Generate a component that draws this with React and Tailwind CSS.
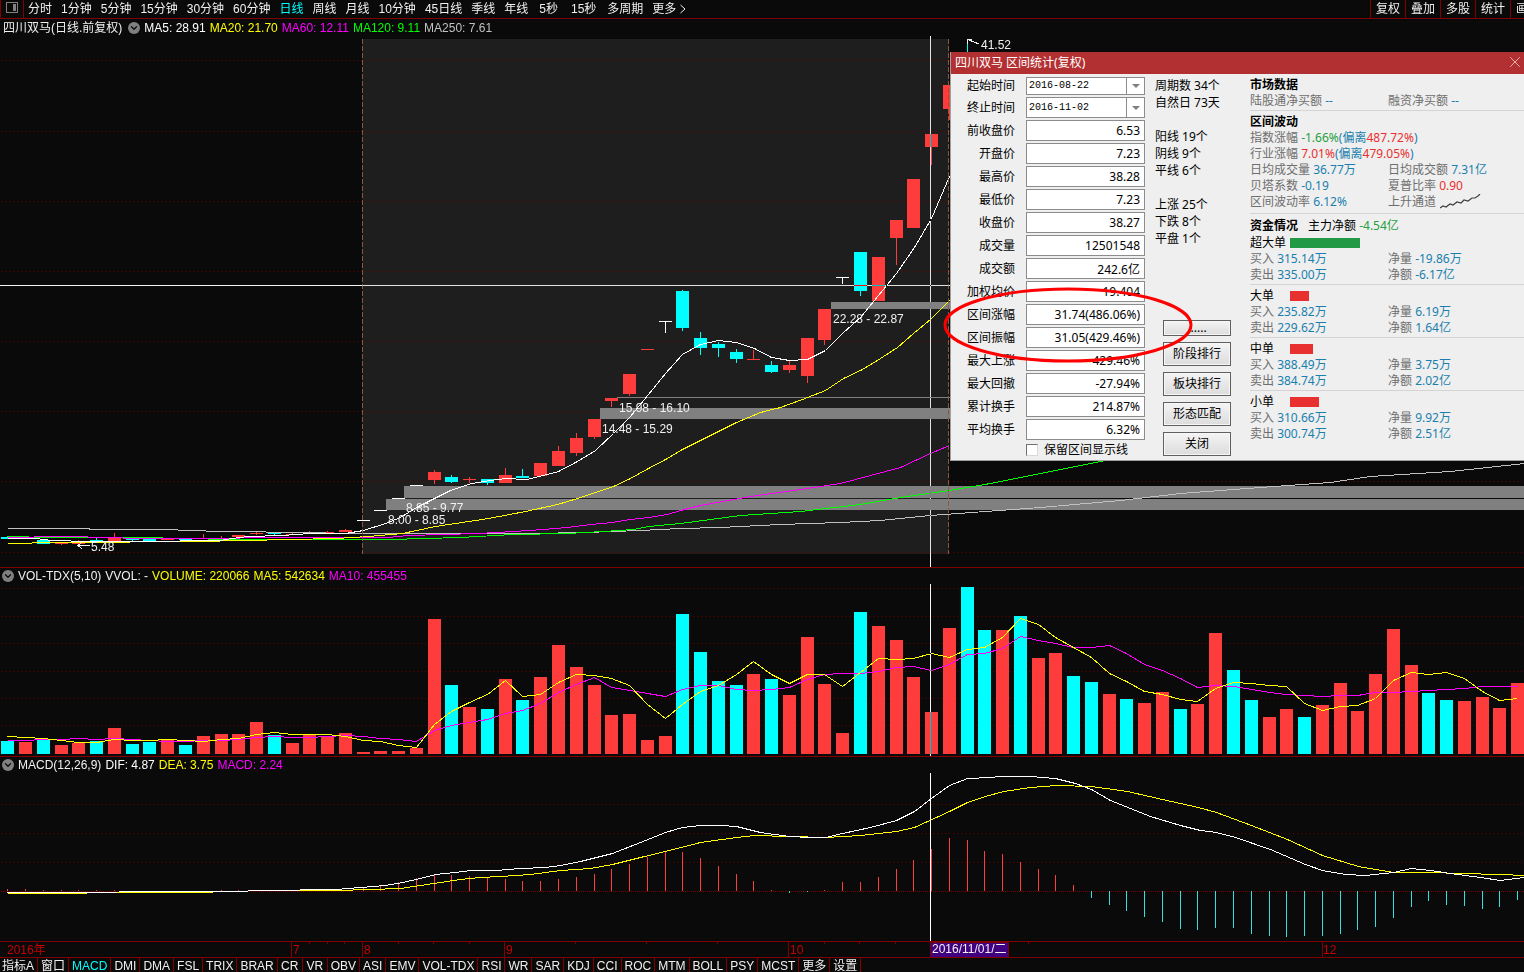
import { useState } from 'react';
import { ChevronDown, X } from 'lucide-react';

const periods = ['分时', '1分钟', '5分钟', '15分钟', '30分钟', '60分钟', '日线', '周线', '月线', '10分钟', '45日线', '季线', '年线', '5秒', '15秒', '多周期'];
const tools = ['复权', '叠加', '多股', '统计', '画'];
const indicators = [
  '指标A', '窗口', 'MACD', 'DMI', 'DMA', 'FSL', 'TRIX', 'BRAR', 'CR', 'VR', 'OBV', 'ASI', 'EMV', 'VOL-TDX', 'RSI', 'WR',
  'SAR', 'KDJ', 'CCI', 'ROC', 'MTM', 'BOLL', 'PSY', 'MCST', '更多', '设置',
];

const RED = '#ff3c3c';
const CYAN = '#00ffff';

// centre of the n-th trading day
const dayX = (i) => Math.floor(7.9 + i * 17.762);

// [day, body top, body bottom, high, low, colour]
const candles = [
  [0, 537, 539, 537, 539, CYAN], [2, 540, 544, 540, 544, CYAN], [3, 542, 544, 542, 545, RED], [4, 541, 544, 540, 544, RED],
  [5, 540, 541, 538, 543, CYAN], [6, 538, 541, 533, 541, RED], [7, 539, 540, 538, 541, CYAN], [8, 539, 541, 539, 541, CYAN],
  [9, 538, 540, 538, 540, RED], [10, 539, 540, 539, 540, CYAN], [11, 538, 539, 534, 539, RED], [12, 538, 539, 536, 539, RED],
  [13, 535, 537, 535, 537, RED], [14, 533, 534, 532, 535, RED], [15, 533, 534, 532, 535, CYAN], [16, 534, 535, 532, 535, RED],
  [17, 533, 534, 531, 534, RED], [18, 532, 533, 531, 533, RED], [19, 530, 532, 529, 532, RED],
  [20, 520, 521, 520, 521, '#fff'], [21, 510, 511, 510, 511, '#fff'], [22, 498, 499, 498, 499, '#fff'], [23, 485, 486, 485, 486, '#fff'],
  [24, 472, 480, 470, 484, RED], [25, 477, 482, 475, 483, CYAN], [26, 479, 480, 477, 483, RED], [27, 479, 483, 479, 485, CYAN],
  [28, 475, 483, 468, 483, RED], [29, 476, 478, 469, 478, CYAN], [30, 463, 476, 463, 477, RED], [31, 451, 466, 446, 466, RED],
  [32, 438, 453, 433, 456, RED], [33, 419, 437, 419, 439, RED], [34, 398, 401, 398, 407, RED], [35, 374, 394, 374, 396, RED],
  [36, 349, 350, 349, 350, RED], [37, 321, 322, 321, 333, '#fff'], [38, 291, 328, 290, 331, CYAN], [39, 338, 348, 332, 355, CYAN],
  [40, 344, 348, 342, 357, CYAN], [41, 352, 359, 349, 363, CYAN], [42, 359, 360, 350, 360, RED], [43, 365, 372, 361, 373, CYAN],
  [44, 365, 370, 361, 373, RED], [45, 338, 376, 338, 383, RED], [46, 309, 340, 309, 345, RED], [47, 277, 278, 277, 284, '#fff'],
  [48, 252, 291, 252, 296, CYAN], [49, 257, 301, 257, 301, RED], [50, 220, 238, 220, 265, RED], [51, 179, 228, 179, 228, RED],
  [52, 134, 147, 134, 165, RED], [53, 85, 109, 85, 120, RED], [54, 80, 90, 40, 90, CYAN],
];

const gaps = [
  { x: 404, y: 486, h: 12, label: '8.85 - 9.77', tx: 406, ty: 512 },
  { x: 386, y: 499, h: 11, label: '8.00 - 8.85', tx: 388, ty: 524 },
  { x: 600, y: 408, h: 11, label: '14.48 - 15.29', tx: 602, ty: 433 },
  { x: 617, y: 397, h: 1, label: '15.98 - 16.10', tx: 619, ty: 412 },
  { x: 831, y: 302, h: 7, label: '22.28 - 22.87', tx: 833, ty: 323 },
];

const priceLines = [
  ['#c0c0c0', '7,528 88,528 90,529 175,529 180,530 230,531 300,532 350,533 530,533 585,532 640,530 680,528 720,527 780,524 840,522 880,520 930,515 1040,507 1120,500 1180,493 1260,487 1330,482 1370,476 1450,471 1524,463'],
  ['#00ff00', '7,536 50,537 140,537 230,539 388,539 425,538 460,537 495,535 513,534 567,533 603,531 633,529 648,526 680,523 740,515 800,511 860,504 900,497 949,490 990,483 1040,473 1100,461 1140,453'],
  ['#ff00ff', '7,537 16,537 52,536 70,536 140,538 340,537 388,537 408,535 443,534 478,533 513,531 543,529 567,527 590,524 612,522 630,519 648,517 667,514 680,510 700,505 750,496 800,489 840,483 870,475 900,467 930,453 949,445'],
  ['#ffff00', '7,543 16,543 48,542 120,542 140,541 195,541 245,540 335,538 368,536 402,533 435,526 455,523 488,518 525,511 557,504 577,498 595,492 613,486 630,478 648,468 667,458 680,450 700,440 718,431 736,422 760,412 780,407 802,399 825,390 843,378 862,369 880,358 897,347 913,333 930,319 949,300'],
  ['#ffffff', '7,538 35,538 52,540 88,541 140,541 220,540 232,538 248,536 282,535 310,533 345,533 363,530 385,523 400,517 416,507 434,498 450,490 471,483 490,480 505,478 526,479 543,475 558,471 577,461 595,450 613,433 630,416 648,394 665,373 682,354 700,344 718,340 736,342 754,348 771,357 789,360 807,359 825,350 842,333 860,317 878,295 896,273 914,247 931,218 949,176'],
];

// top edge of every volume bar, c = falling day
const volume = (
  '741c 742 740c 745 743 741c 728 744c 742c 739 745c 736 734 734 722 735c 743 735 736 733 752 751 751 748 619 685c 707 709c 679 700c ' +
  '677 645 667 685 715 714 740 736 614c 652c 681c 685c 674 679c 695 637 684 733 612c 626 640 677 712 628 587c 630c 630 616c 658 653 ' +
  '676c 682c 694 699c 703 692 709c 704 633 670c 700c 717 709 717c 705 683 711 674 629 665 693c 700c 701 697 708 683'
).split(' ').map((v) => ({ top: parseInt(v, 10), down: v.endsWith('c') }));

const average = (span, early) =>
  volume
    .map((_, i) => {
      if (i < early.length) return `${dayX(i)},${early[i]}`;
      const part = volume.slice(i - span + 1, i + 1);
      return `${dayX(i)},${Math.round(part.reduce((sum, v) => sum + v.top, 0) / span)}`;
    })
    .join(' ');

const volumeLines = [
  ['#ff00ff', average(10, [740, 740, 739, 739, 738, 739, 738, 739, 740])],
  ['#ffff00', average(5, [736, 737, 738, 740])],
];

const histogram = [
  889, 889, 890, 890, 890, 890, 890, 891, 891, 891, 891, 891, 890, 890, 890, 890, 890, 890, 890, 890, 888, 885, 882, 878, 874, 875, 876, 878,
  879, 881, 881, 879, 877, 874, 869, 864, 857, 851, 852, 858, 866, 874, 881, 890, 893, 892, 890, 882, 882, 877, 869, 860, 849, 838, 840, 851,
  854, 862, 869, 875, 885, 898, 905, 911, 917, 922, 929, 930, 928, 928, 934, 936, 937, 936, 936, 934, 930, 927, 918, 907, 901, 905, 906, 909,
  907, 900,
];

const macdLines = [
  ['#ffff00', '7,893 85,893 88,892 195,892 230,891 265,890 335,890 370,889 400,888 420,885 440,882 460,879 480,877 500,876 530,874 560,870 590,868 612,864 640,857 665,851 700,842 736,837 754,835 825,837 860,835 896,831 914,827 949,811 967,802 985,796 1003,791 1030,787 1056,785 1091,786 1127,791 1162,799 1198,807 1216,812 1251,825 1287,839 1322,855 1358,866 1393,872 1430,872 1460,873 1500,874 1524,875'],
  ['#ffffff', '7,892 230,891 265,890 335,889 360,887 385,885 402,882 420,878 435,874 455,872 470,870 495,870 520,868 545,867 560,865 580,861 612,853 640,842 665,832 682,827 700,825 720,825 736,826 760,832 789,836 810,837 825,837 842,833 870,827 896,820 914,811 931,798 949,785 967,778 990,777 1000,776 1030,776 1055,778 1075,783 1091,789 1110,800 1130,808 1150,816 1180,825 1200,830 1216,832 1235,837 1270,849 1305,864 1322,870 1345,874 1365,875 1393,872 1411,868 1430,870 1450,873 1480,877 1500,880 1524,877'],
];

const prices = [
  ['前收盘价', '6.53'], ['开盘价', '7.23'], ['最高价', '38.28'], ['最低价', '7.23'], ['收盘价', '38.27'], ['成交量', '12501548'],
  ['成交额', '242.6亿'], ['加权均价', '19.404'], ['区间涨幅', '31.74(486.06%)'], ['区间振幅', '31.05(429.46%)'], ['最大上涨', '429.46%'],
  ['最大回撤', '-27.94%'], ['累计换手', '214.87%'], ['平均换手', '6.32%'],
];

const counts = ['周期数 34个', '自然日 73天', '', '阳线 19个', '阴线 9个', '平线 6个', '', '上涨 25个', '下跌 8个', '平盘 1个'];

const orders = [
  { name: '大单', bar: 19, buy: '235.82万', sell: '229.62万', net: '6.19万', amount: '1.64亿' },
  { name: '中单', bar: 23, buy: '388.49万', sell: '384.74万', net: '3.75万', amount: '2.02亿' },
  { name: '小单', bar: 29, buy: '310.66万', sell: '300.74万', net: '9.92万', amount: '2.51亿' },
];

// a chart area; children are drawn in page coordinates
function Plot({ top, className, children }) {
  return (
    <svg className={`block w-full ${className}`} shapeRendering="crispEdges">
      <g transform={`translate(0 ${-top})`}>{children}</g>
    </svg>
  );
}

function GridLines({ rows }) {
  return rows.map((y) => (
    <line key={y} x1="1" x2="100%" y1={y + 0.5} y2={y + 0.5} stroke="#640000" strokeDasharray="1 3" />
  ));
}

function Lines({ lines }) {
  return lines.map(([color, points]) => (
    <polyline key={color} points={points} fill="none" stroke={color} transform="translate(0.5 0.5)" />
  ));
}

function Legend({ title, items }) {
  return (
    <div className="flex h-4 items-center gap-1 overflow-hidden whitespace-nowrap">
      {title}
      {items.map(([text, color]) => (
        <span key={text} className={color}>{text}</span>
      ))}
    </div>
  );
}

function RoundToggle({ label }) {
  return (
    <button aria-label={label} className="ml-0.5 flex size-3 shrink-0 items-center justify-center rounded-full bg-[#808080] text-[#0a0a0a]">
      <ChevronDown size={10} strokeWidth={3} />
    </button>
  );
}

function Pair({ label, value, color = 'text-[#1a7fae]' }) {
  return (
    <div>
      <span className="text-[#6e6e6e]">{label}</span> <span className={color}>{value}</span>
    </div>
  );
}

function Flow({ buy, sell, net, amount }) {
  return (
    <div className="grid grid-cols-[138px_1fr]">
      <Pair label="买入" value={buy} />
      <Pair label="净量" value={net} />
      <Pair label="卖出" value={sell} />
      <Pair label="净额" value={amount} />
    </div>
  );
}

function DateRow({ id, label, value, height }) {
  return (
    <div className="grid grid-cols-[64px_119px] items-center gap-[11px]">
      <label htmlFor={id} className="text-right">{label}</label>
      <div className="relative">
        <select id={id} className={`block w-full appearance-none border border-[#8c8c8c] bg-white pl-0.5 font-['Liberation_Mono','Noto_Sans_CJK_SC',monospace] text-[10px] ${height}`}>
          <option>{value}</option>
        </select>
        <span className="pointer-events-none absolute inset-y-px right-px flex w-[18px] items-center justify-center border-l border-[#8c8c8c]">
          <span className="border-x-4 border-t-4 border-x-transparent border-t-[#808080]" />
        </span>
      </div>
    </div>
  );
}

function ActionButton({ className = 'h-6', children }) {
  return (
    <button className={`block w-[68px] overflow-hidden border border-[#606060] bg-linear-to-b from-[#f4f4f4] to-[#dcdcdc] text-center leading-none inset-ring inset-ring-[#f6f6f6] ${className}`}>
      {children}
    </button>
  );
}

function RangeDialog() {
  const [keep, setKeep] = useState(false);

  return (
    <section className="absolute top-[52px] right-0 w-[574px] border-b border-l border-[#a0a0a0] bg-[#efefef] pb-0.5 font-['Noto_Sans','Noto_Sans_CJK_SC',sans-serif] text-xs leading-4 whitespace-nowrap text-black">
      <header className="flex h-[22px] items-center justify-between bg-[#b33032] pl-1 text-white">
        <h2>四川双马 区间统计(复权)</h2>
        <button aria-label="关闭窗口" className="pb-0.5 text-[#f4d8d8]"><X size={18} strokeWidth={1} /></button>
      </header>
      <div className="flex pt-[3px]">
        <form className="flex flex-col gap-0.5">
          <DateRow id="from" label="起始时间" value="2016-08-22" height="h-[18px]" />
          <DateRow id="to" label="终止时间" value="2016-11-02" height="h-[21px]" />
          {prices.map(([label, value]) => (
            <div key={label} className="grid grid-cols-[64px_119px] items-center gap-[11px]">
              <label htmlFor={label} className="text-right">{label}</label>
              <input id={label} readOnly value={value} className="h-[21px] w-full border border-[#8c8c8c] bg-white pr-1 text-right" />
            </div>
          ))}
          <label className="ml-[75px] flex h-4 items-center gap-1.5">
            <input
              type="checkbox"
              checked={keep}
              onChange={(e) => setKeep(e.target.checked)}
              className="size-3 appearance-none border border-[#d8d8d8] border-t-[#707070] border-l-[#707070] bg-white checked:bg-[#707070]"
            />
            保留区间显示线
          </label>
        </form>

        <div className="ml-2.5 flex w-[95px] flex-col justify-between pb-0.5">
          <div className="leading-[17px]">
            {counts.map((text, i) => (
              <p key={i} className="h-[17px]">{text}</p>
            ))}
          </div>
          <div className="flex flex-col gap-1.5 pl-2">
            <ActionButton className="h-4">......</ActionButton>
            <ActionButton>阶段排行</ActionButton>
            <ActionButton>板块排行</ActionButton>
            <ActionButton>形态匹配</ActionButton>
            <ActionButton>关闭</ActionButton>
          </div>
        </div>

        <div className="flex-1 divide-y divide-[#d4d4d4]">
          <div className="pb-px">
            <h3 className="font-bold">市场数据</h3>
            <div className="grid grid-cols-[138px_1fr]">
              <Pair label="陆股通净买额" value="--" />
              <Pair label="融资净买额" value="--" />
            </div>
          </div>
          <div className="py-[3px]">
            <h3 className="font-bold">区间波动</h3>
            <p className="text-[#1a7fae]">
              <span className="text-[#6e6e6e]">指数涨幅</span> <span className="text-[#26a040]">-1.66%</span>(偏离<span className="text-[#e83030]">487.72%</span>)
            </p>
            <p className="text-[#1a7fae]">
              <span className="text-[#6e6e6e]">行业涨幅</span> <span className="text-[#e83030]">7.01%</span>(偏离<span className="text-[#e83030]">479.05%</span>)
            </p>
            <div className="grid grid-cols-[138px_1fr]">
              <Pair label="日均成交量" value="36.77万" />
              <Pair label="日均成交额" value="7.31亿" />
              <Pair label="贝塔系数" value="-0.19" />
              <Pair label="夏普比率" value="0.90" color="text-[#e83030]" />
              <Pair label="区间波动率" value="6.12%" />
              <div className="flex items-center gap-1 text-[#6e6e6e]">
                上升通道
                <svg width="41" height="16" fill="none" stroke="#404040" strokeWidth="1.2">
                  <path d="M0 14l3-2 3 1 4-3 3 1 4-3 4 1 3-3 4 1 4-3 3 0 3-2 2-2" />
                </svg>
              </div>
            </div>
          </div>
          <div className="pt-[3px] pb-px">
            <p className="leading-[17px]"><b>资金情况</b><span className="ml-2.5">主力净额</span> <span className="text-[#26a040]">-4.54亿</span></p>
            <div className="flex h-[17px] items-center"><span className="w-10">超大单</span><i className="h-2.5 w-[70px] bg-[#229a45]" /></div>
            <Flow buy="315.14万" sell="335.00万" net="-19.86万" amount="-6.17亿" />
          </div>
          {orders.map((order) => (
            <div key={order.name} className="pt-[3px] pb-px">
              <div className="flex h-4 items-center">
                <span className="w-10">{order.name}</span>
                <i className="h-2.5 bg-[#e83030]" style={{ width: order.bar }} />
              </div>
              <Flow {...order} />
            </div>
          ))}
        </div>
      </div>
      <svg className="pointer-events-none absolute top-[234px] -left-2 h-20 w-[252px]" fill="none" stroke="#ff0000" strokeWidth="3">
        <ellipse cx="125" cy="39" rx="123" ry="36" />
      </svg>
    </section>
  );
}

export default function App() {
  const [period, setPeriod] = useState('日线');
  const [indicator, setIndicator] = useState('MACD');

  return (
    <main className="relative flex min-h-screen flex-col overflow-hidden bg-[#0a0a0a] font-['Liberation_Sans','Noto_Sans_CJK_SC',sans-serif] text-xs leading-4 text-[#f0f0f0]">
      <nav className="flex h-[19px] overflow-hidden border-b border-[#800000] leading-[18px] whitespace-nowrap">
        <button aria-label="侧栏" className="flex w-6 shrink-0 items-center justify-center border-r border-l border-[#800000] pb-1">
          <svg width="12" height="11" fill="none" stroke="#808080" shapeRendering="crispEdges">
            <rect x="0.5" y="0.5" width="11" height="10" />
            <path d="M7 2h3v7H7z" fill="#808080" stroke="none" />
          </svg>
        </button>
        <div className="flex gap-[9px] pl-1">
          {periods.map((name) => (
            <button
              key={name}
              onClick={() => setPeriod(name)}
              className={`${period === name ? 'text-[#00ffff]' : ''} ${name.endsWith('秒') ? 'px-0.5' : ''} h-[18px]`}
            >
              {name}
            </button>
          ))}
          <button className="flex h-[18px] items-center gap-1">
            更多
            <svg width="6" height="10" fill="none" stroke="#f0f0f0"><path d="M.5 1l4.500 4-4.500 4" /></svg>
          </button>
        </div>
        <div className="ml-auto flex w-[154px] shrink-0 overflow-hidden">
          {tools.map((name) => (
            <button key={name} className="h-[18px] w-[35px] shrink-0 border-l border-[#800000] pl-[5px] text-left">
              {name}
            </button>
          ))}
        </div>
      </nav>

      <section className="border-b border-[#800000] pt-px">
        <Legend
          title={<><h1 className="pl-[3px]">四川双马(日线.前复权)</h1><RoundToggle label="主图指标" /></>}
          items={[
            ['MA5: 28.91', 'text-white'], ['MA20: 21.70', 'text-[#ffff00]'], ['MA60: 12.11', 'text-[#ff00ff]'],
            ['MA120: 9.11', 'text-[#00ff00]'], ['MA250: 7.61', 'text-[#c0c0c0]'],
          ]}
        />
        <Plot top={36} className="h-[531px]">
          <rect x="362" y="39" width="587" height="515" fill="#1e1e1e" />
          <GridLines rows={[60, 131, 201, 271, 341, 411, 481, 552]} />
          {gaps.map((gap) => (
            <rect key={gap.label} x={gap.x} y={gap.y} width="100%" height={gap.h} fill="#808080" />
          ))}
          {candles.map(([day, top, bottom, high, low, color]) => (
            <g key={day} fill={color}>
              <rect x={dayX(day) - 6} y={top} width="13" height={bottom - top} />
              <rect x={dayX(day)} y={high} width="1" height={low - high} />
            </g>
          ))}
          <Lines lines={priceLines} />
          <g fill="#f0f0f0">
            {gaps.map((gap) => (
              <text key={gap.label} x={gap.tx} y={gap.ty}>{gap.label}</text>
            ))}
            <text x="91" y="551">5.48</text>
            <text x="981" y="49">41.52</text>
          </g>
          <path d="M90 545.5H78M82 542l-4 3.5 4 3.5M979 44l-10-4M967.500 44v-5h4" fill="none" stroke="#f0f0f0" />
          <path d="M362.500 39v515M948.500 39v515" stroke="#8a5a3c" strokeDasharray="5 2" />
          <rect y="285" width="100%" height="1" fill="#fff" className="mix-blend-difference" />
          <rect x="930" y="35" width="1" height="532" fill="#fff" className="mix-blend-difference" />
        </Plot>
      </section>

      <section className="border-b border-[#800000]">
        <Legend
          title={<><RoundToggle label="成交量指标" /><span>VOL-TDX(5,10)</span></>}
          items={[
            ['VVOL: -', ''], ['VOLUME: 220066', 'text-[#ffff00]'], ['MA5: 542634', 'text-[#ffff00]'], ['MA10: 455455', 'text-[#ff00ff]'],
          ]}
        />
        <Plot top={584} className="h-[172px]">
          <GridLines rows={[588, 616, 643, 671, 698, 725]} />
          {volume.map((bar, i) => (
            <rect key={i} x={dayX(i) - 6} y={bar.top} width="13" height={754 - bar.top} fill={bar.down ? CYAN : RED} />
          ))}
          <Lines lines={volumeLines} />
          <rect x="930" y="584" width="1" height="172" fill="#fff" className="mix-blend-difference" />
        </Plot>
      </section>

      <section>
        <Legend
          title={<><RoundToggle label="副图指标" /><span>MACD(12,26,9)</span></>}
          items={[['DIF: 4.87', 'text-white'], ['DEA: 3.75', 'text-[#ffff00]'], ['MACD: 2.24', 'text-[#ff00ff]']]}
        />
        <Plot top={773} className="h-[168px]">
          <GridLines rows={[804, 833, 862]} />
          <line x1="1" x2="100%" y1="891.5" y2="891.5" stroke="#800000" strokeDasharray="1 1" />
          {histogram.map((y, i) => (
            <rect key={i} x={dayX(i)} y={Math.min(y, 891)} width="1" height={Math.abs(y - 891)} fill={y > 891 ? '#33e0e0' : RED} />
          ))}
          <Lines lines={macdLines} />
          <rect x="930" y="773" width="1" height="168" fill="#fff" />
        </Plot>
      </section>

      <svg className="block h-4 w-full border-t border-[#800000]" fill="#c80000" shapeRendering="crispEdges">
        <path
          d="M291.500 0v16M362.500 0v16M504.500 0v16M788.500 0v16M1322.500 0v16M309.500 0v2M327.500 0v2M344.500 0v2M398.500 0v2M433.500 0v2M469.500 0v2M575.500 0v2M646.500 0v2M717.500 0v2M824.500 0v2M859.500 0v2M895.500 0v2M1028.500 0v2"
          stroke="#800000"
        />
        <text x="7" y="12">2016年</text>
        <text x="293" y="12">7</text>
        <text x="364" y="12">8</text>
        <text x="506" y="12">9</text>
        <text x="790" y="12">10</text>
        <text x="1323" y="12">12</text>
        <rect x="930.500" y="0" width="78" height="15" fill="#400080" stroke="#800000" />
        <text x="932" y="11" fill="#f0f0f0">2016/11/01/二</text>
      </svg>

      <nav className="flex h-[15px] overflow-hidden border-t border-[#800000] leading-4 whitespace-nowrap">
        {indicators.map((name) => (
          <button
            key={name}
            onClick={() => setIndicator(name)}
            className={`${indicator === name ? 'text-[#00ffff]' : ''} h-4 min-w-[25px] border-r border-[#800000] px-[3px] first:pl-0.5`}
          >
            {name}
          </button>
        ))}
      </nav>

      <RangeDialog />
    </main>
  );
}
